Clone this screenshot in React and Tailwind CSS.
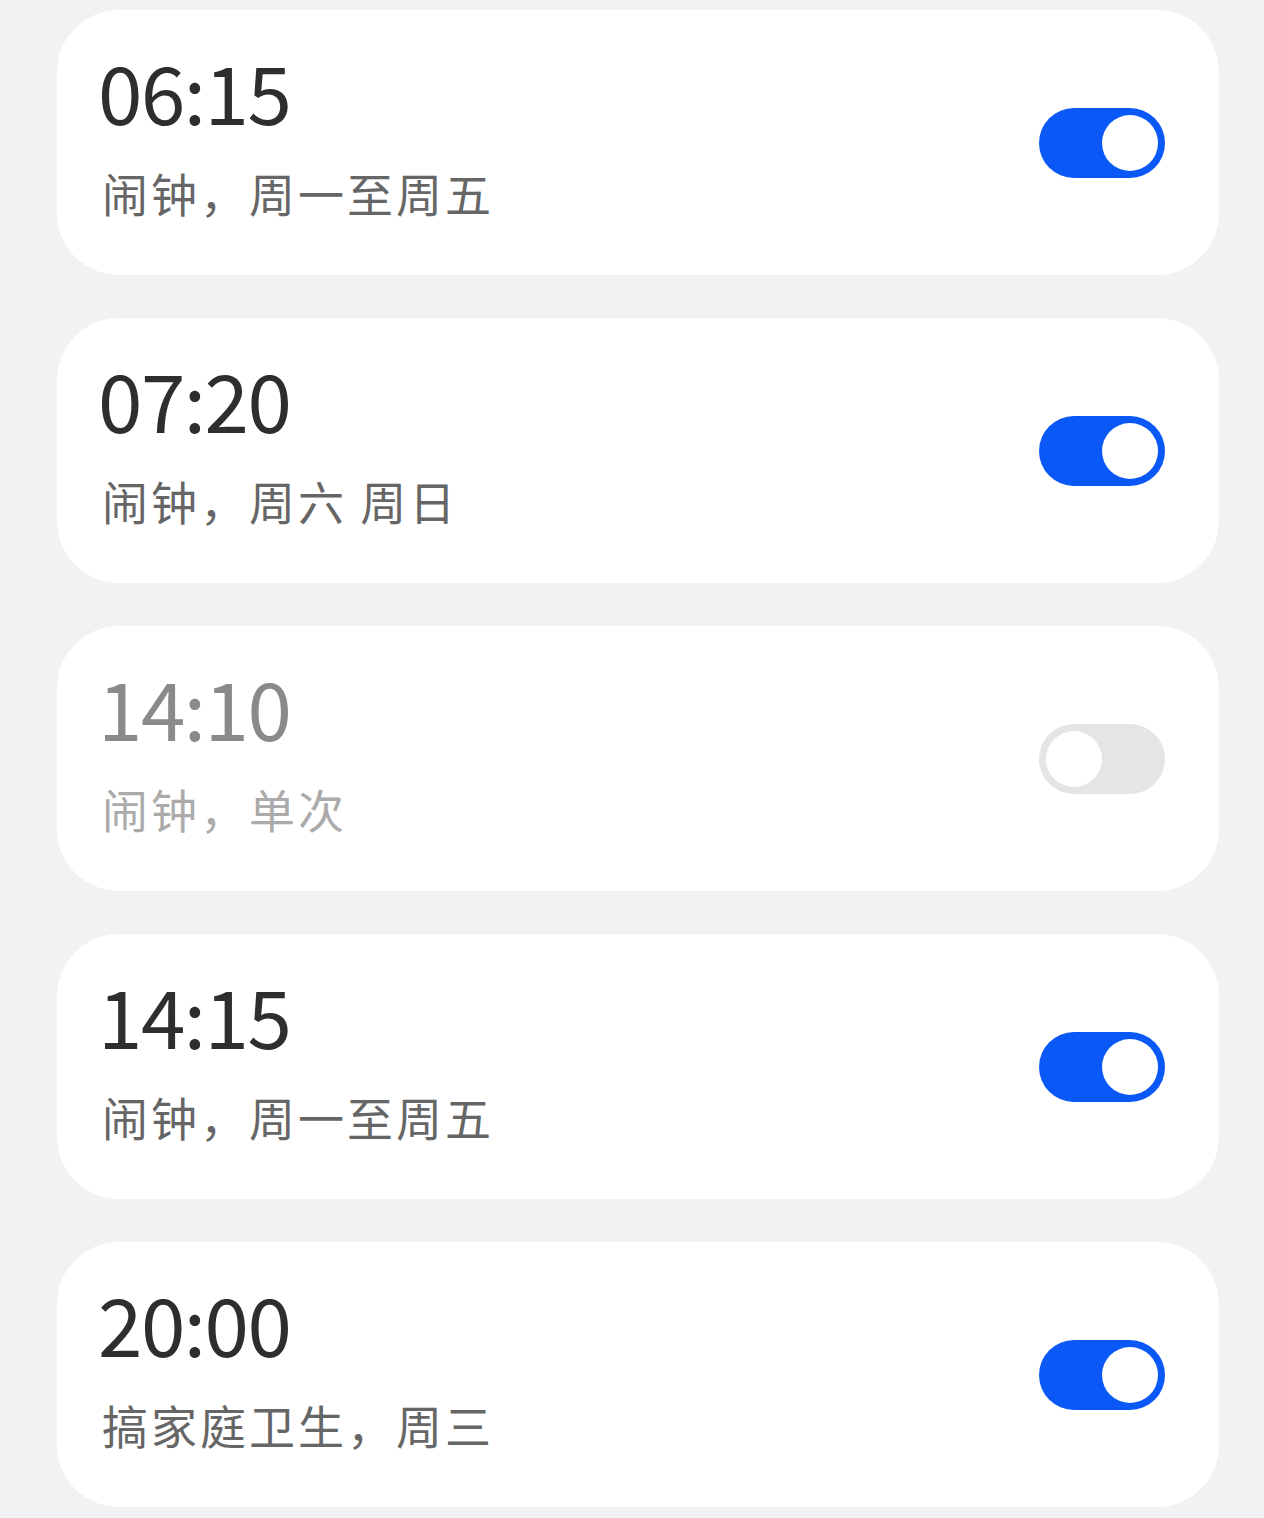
import React from 'react';

const alarms = [
  { time: '06:15', label: '闹钟，周一至周五', on: true },
  { time: '07:20', label: '闹钟，周六 周日', on: true },
  { time: '14:10', label: '闹钟，单次', on: false },
  { time: '14:15', label: '闹钟，周一至周五', on: true },
  { time: '20:00', label: '搞家庭卫生，周三', on: true },
];

const Toggle = ({ on }) => (
  <div
    className={`w-[126px] h-[70px] rounded-full p-[7px] flex items-center ${
      on ? 'bg-[#0a59f7] justify-end' : 'bg-[#e5e5e5] justify-start'
    }`}
  >
    <div className="w-[56px] h-[56px] rounded-full bg-white" />
  </div>
);

const AlarmCard = ({ time, label, on }) => (
  <div className="h-[265px] bg-white rounded-[62px] pl-[41px] pr-[54px] flex items-center justify-between">
    <div className="self-start pt-[32px] flex flex-col">
      <span
        className={`text-[80px] leading-[96px] tracking-[-1.5px] ${on ? 'text-[#2e2e2e]' : 'text-[#8a8a8a]'}`}
      >
        {time}
      </span>
      <span
        className={`text-[46px] leading-[60px] tracking-[3px] mt-[24px] pl-[4px] ${on ? 'text-[#666666]' : 'text-[#ababab]'}`}
      >
        {label}
      </span>
    </div>
    <Toggle on={on} />
  </div>
);

export default function App() {
  return (
    <div
      className="min-h-[1518px] bg-[#f1f2f4] pl-[57px] pr-[45px] pt-[10px] pb-[11px] flex flex-col gap-[43px]"
      style={{ fontFamily: '"Noto Sans CJK SC", "Noto Sans", sans-serif' }}
    >
      {alarms.map((a) => (
        <AlarmCard key={a.time} {...a} />
      ))}
    </div>
  );
}
